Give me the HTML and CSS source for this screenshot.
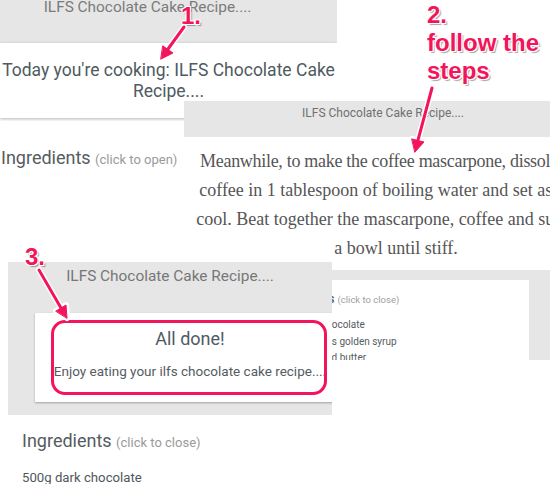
FILE: index.html
```html
<!DOCTYPE html>
<html lang="en">
<head>
    <meta charset="UTF-8">
    <meta name="viewport" content="width=device-width, initial-scale=1.0">
    <title>ILFS Chocolate Cake Recipe - steps</title>
    <link rel="stylesheet" href="styles.css">
</head>
<body>
    <div class="collage">
        <!-- shot 1: start screen -->
        <div class="shot shot-cooking">
            <div class="shot-bar">ILFS Chocolate Cake Recipe....</div>
            <div class="cooking-card">Today you're cooking: ILFS Chocolate Cake<br>Recipe....</div>
        </div>

        <div class="shot shot-open">
            <h2 class="ing-title">Ingredients <span class="ing-hint">(click to open)</span></h2>
        </div>

        <!-- shot 2: a step -->
        <div class="shot shot-step">
            <div class="shot-bar small">ILFS Chocolate Cake Recipe....</div>
            <div class="step-body">
                <p class="step-text"><span class="tight">Meanwhile, to make the coffee mascarpone, dissolve the</span><br>coffee in 1 tablespoon of boiling water and set aside to<br>cool. Beat together the mascarpone, coffee and sugar in<br>a bowl until stiff.</p>
            </div>
        </div>

        <!-- shot 4: small ingredients list -->
        <div class="shot shot-list">
            <div class="list-card">
                <div class="list-title">Ingredients <span class="list-hint">(click to close)</span></div>
                <ul class="list-items">
                    <li>500g dark chocolate</li>
                    <li>2 tablespoons golden syrup</li>
                    <li>225g unsalted butter</li>
                </ul>
            </div>
        </div>

        <!-- shot 3: finished -->
        <div class="shot shot-done">
            <div class="done-title">ILFS Chocolate Cake Recipe....</div>
            <div class="done-card">
                <div class="done-head">All done!</div>
                <div class="done-text">Enjoy eating your ilfs chocolate cake recipe....</div>
            </div>
        </div>

        <div class="shot shot-close">
            <h2 class="ing-title">Ingredients <span class="ing-hint">(click to close)</span></h2>
            <ul class="ing-list">
                <li>500g dark chocolate</li>
                <li>2 tablespoons golden syrup</li>
            </ul>
        </div>

        <!-- annotations -->
        <div class="note note-1">1.</div>
        <div class="note note-2">2.<br>follow the<br>steps</div>
        <div class="note note-3">3.</div>
        <div class="highlight"></div>

        <svg class="arrows" width="550" height="484" viewBox="0 0 550 484">
            <g stroke="#fff" stroke-width="6" stroke-linecap="round" fill="#fff" stroke-linejoin="round">
                <line x1="184" y1="27" x2="168" y2="49"/>
                <polygon points="161,59 173,53 163,46"/>
                <line x1="432" y1="88" x2="418" y2="140"/>
                <polygon points="415,152 424,142 412,139"/>
                <line x1="39" y1="270" x2="61" y2="308"/>
                <polygon points="67,318 66,305 56,311"/>
            </g>
            <g stroke="#f2155c" stroke-width="3" stroke-linecap="round" fill="#f2155c" stroke-linejoin="round">
                <line x1="184" y1="27" x2="168" y2="49"/>
                <polygon points="161,59 173,53 163,46" stroke-width="1"/>
                <line x1="432" y1="88" x2="418" y2="140"/>
                <polygon points="415,152 424,142 412,139" stroke-width="1"/>
                <line x1="39" y1="270" x2="61" y2="308"/>
                <polygon points="67,318 66,305 56,311" stroke-width="1"/>
            </g>
        </svg>
    </div>
</body>
</html>
```

FILE: styles.css
```css
body {
    margin: 0;
    font-family: Roboto, "Liberation Sans", sans-serif;
    background: #fff;
}
.collage {
    position: relative;
    width: 550px;
    height: 484px;
    overflow: hidden;
    background: #fff;
}
.shot {
    position: absolute;
    overflow: hidden;
}

/* shot 1 */
.shot-cooking {
    left: 0;
    top: -12px;
    width: 337px;
    height: 133px;
    z-index: 1;
}
.shot-bar {
    height: 55px;
    background: #e6e6e6;
    color: #7b7b7b;
    font-size: 15.4px;
    text-align: center;
    padding: 10px 42px 0 0;
    box-sizing: border-box;
    line-height: 18px;
}
.cooking-card {
    background: #fff;
    height: 75px;
    box-shadow: 0 1px 3px rgba(0, 0, 0, 0.3);
    color: #4f5a61;
    font-size: 17.5px;
    line-height: 21px;
    text-align: center;
    white-space: nowrap;
    padding-top: 17px;
    box-sizing: border-box;
}

.shot-open {
    left: 0;
    top: 122px;
    width: 200px;
    height: 60px;
}
.ing-title {
    margin: 0;
    font-weight: normal;
    font-size: 18px;
    color: #555c61;
    line-height: 24px;
}
.ing-hint {
    font-size: 13px;
    color: #9a9a9a;
}
.shot-open .ing-title {
    padding: 24px 0 0 1px;
}

/* shot 2 */
.shot-step {
    left: 184px;
    top: 101px;
    width: 420px;
    height: 169px;
    z-index: 2;
    background: #fff;
}
.shot-bar.small {
    height: 36px;
    font-size: 12px;
    padding: 5px 0 0;
    line-height: 14px;
    color: #707070;
    width: 398px;
}
.step-body {
    padding-top: 10px;
    width: 424px;
}
.step-text {
    margin: 0;
    font-family: "Liberation Serif", serif;
    font-size: 18px;
    line-height: 29px;
    color: #555;
    text-align: center;
    white-space: nowrap;
}
.step-text .tight {
    letter-spacing: -0.3px;
}

/* shot 4 */
.shot-list {
    left: 262px;
    top: 270px;
    width: 288px;
    height: 90px;
    background: #e6e6e6;
    z-index: 3;
}
.list-card {
    background: #fff;
    margin: 10px 21px 0 0;
    height: 80px;
    padding: 12px 0 0 12px;
    box-sizing: border-box;
}
.list-title {
    font-size: 12px;
    color: #50585d;
    font-weight: 500;
    line-height: 14px;
}
.list-hint {
    font-size: 9.5px;
    color: #a0a0a0;
    font-weight: normal;
}
.list-items {
    list-style: none;
    margin: 10px 0 0;
    padding: 0;
    font-size: 10px;
    line-height: 16.5px;
    color: #555c61;
}

/* shot 3 */
.shot-done {
    left: 8px;
    top: 262px;
    width: 324px;
    height: 153px;
    background: #e6e6e6;
    z-index: 4;
}
.done-title {
    text-align: center;
    font-size: 15.4px;
    line-height: 18px;
    color: #777;
    padding-top: 5px;
}
.done-card {
    background: #fff;
    width: 310px;
    margin: 28px 0 0 27px;
    height: 89px;
    box-shadow: 0 1px 2px rgba(0, 0, 0, 0.3);
    text-align: center;
    padding-top: 15px;
    box-sizing: border-box;
}
.done-head {
    font-size: 18px;
    line-height: 22px;
    color: #4f5a61;
}
.done-text {
    margin-top: 13px;
    font-size: 13.5px;
    line-height: 16px;
    color: #555c61;
}

.shot-close {
    left: 0;
    top: 415px;
    width: 340px;
    height: 80px;
    padding-left: 22px;
    box-sizing: border-box;
}
.shot-close .ing-title {
    padding-top: 14px;
}
.ing-list {
    list-style: none;
    margin: 13px 0 0;
    padding: 0;
    font-size: 13.2px;
    line-height: 20px;
    color: #50585d;
}

/* annotations */
.note {
    position: absolute;
    z-index: 10;
    font-family: "Liberation Sans", Arial, sans-serif;
    font-weight: bold;
    font-size: 24px;
    line-height: 28px;
    color: #f2155c;
    text-shadow: -1px -1px 0 #fff, 1px -1px 0 #fff, -1px 1px 0 #fff, 1px 1px 0 #fff, 2px 2px 1px rgba(0, 0, 0, 0.35);
}
.note-1 {
    left: 181px;
    top: 2px;
}
.note-2 {
    left: 427px;
    top: 1px;
}
.note-3 {
    left: 25px;
    top: 243px;
}
.highlight {
    position: absolute;
    z-index: 10;
    left: 51px;
    top: 320px;
    width: 276px;
    height: 75px;
    box-sizing: border-box;
    border: 3px solid #f2155c;
    border-radius: 14px;
}
.arrows {
    position: absolute;
    left: 0;
    top: 0;
    z-index: 11;
}
```
